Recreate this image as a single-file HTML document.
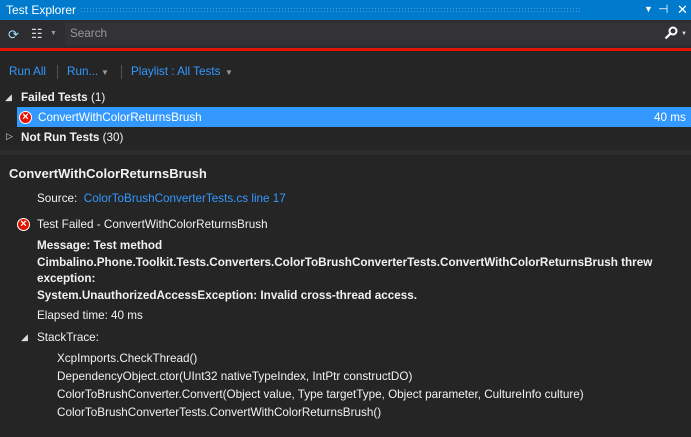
<!DOCTYPE html>
<html><head><style>
body{margin:0;width:691px;height:437px;background:#252526;font-family:"Liberation Sans",sans-serif;font-size:11.7px;color:#f1f1f1;position:relative;overflow:hidden}
.a{position:absolute;white-space:nowrap}
.b{font-weight:bold}
.l{color:#3399ff}
.x{position:absolute;width:13px;height:13px;border-radius:50%;background:#e51400;border:1px solid #fff;box-sizing:border-box;color:#fff;font-size:11px;line-height:11px;text-align:center;font-weight:bold}
</style></head><body>
<div class="a" style="left:0;top:0;width:691px;height:20px;background:#007acc"></div>
<div class="a" style="left:6px;top:3px;color:#fff;font-size:12px">Test Explorer</div>
<div class="a" style="left:80px;top:7px;width:500px;height:6px;background-image:radial-gradient(#4aa0dd 0.6px,transparent 0.8px);background-size:3px 3px"></div>
<div class="a" style="left:644px;top:4px;color:#fff;font-size:9px">▼</div>
<div class="a" style="left:658px;top:2px;color:#fff;font-size:12px">⊣</div>
<div class="a" style="left:677px;top:2px;color:#fff;font-size:13px">✕</div>
<div class="a" style="left:0;top:20px;width:691px;height:29px;background:#2d2d30"></div>
<div class="a" style="left:65px;top:23px;width:626px;height:22px;background:#333337"></div>
<div class="a" style="left:8px;top:27px;color:#9cdcfe;font-size:13px">⟳</div>
<div class="a" style="left:31px;top:26px;color:#ddd;font-size:13px">☷</div>
<div class="a" style="left:50px;top:30px;color:#999;font-size:7px">▼</div>
<div class="a" style="left:70px;top:27px;color:#999">Search</div>
<svg class="a" style="left:664px;top:26px" width="14" height="14" viewBox="0 0 14 14"><circle cx="9" cy="5" r="3.5" fill="none" stroke="#fff" stroke-width="2"/><line x1="6.5" y1="7.5" x2="1.5" y2="12.5" stroke="#fff" stroke-width="2.2"/></svg>
<div class="a" style="left:681px;top:31px;color:#ddd;font-size:6px">▼</div>
<div class="a" style="left:0;top:48px;width:691px;height:3px;background:#e51400"></div>
<div class="a l" style="left:9px;top:65px">Run All</div>
<div class="a" style="left:57px;top:65px;width:1px;height:14px;background:#555"></div>
<div class="a l" style="left:67px;top:65px">Run...</div>
<div class="a" style="left:101px;top:68px;color:#999;font-size:8px">▼</div>
<div class="a" style="left:121px;top:65px;width:1px;height:14px;background:#555"></div>
<div class="a l" style="left:131px;top:65px">Playlist : All Tests</div>
<div class="a" style="left:225px;top:68px;color:#999;font-size:8px">▼</div>
<div class="a" style="left:5px;top:92px;color:#ddd;font-size:9px">◢</div>
<div class="a b" style="left:21px;top:91px">Failed Tests <span style="font-weight:normal">(1)</span></div>
<div class="a" style="left:17px;top:107px;width:674px;height:20px;background:#3399ff"></div>
<div class="x" style="left:19px;top:111px">×</div>
<div class="a" style="left:38px;top:111px;color:#fff">ConvertWithColorReturnsBrush</div>
<div class="a" style="left:654px;top:111px;color:#fff">40 ms</div>
<div class="a" style="left:6px;top:131px;color:#ddd;font-size:9px">▷</div>
<div class="a b" style="left:21px;top:131px">Not Run Tests <span style="font-weight:normal">(30)</span></div>
<div class="a" style="left:0;top:150px;width:691px;height:5px;background:#2d2d30"></div>
<div class="a b" style="left:9px;top:166px;font-size:13px">ConvertWithColorReturnsBrush</div>
<div class="a" style="left:37px;top:192px">Source:&nbsp; <span class="l">ColorToBrushConverterTests.cs line 17</span></div>
<div class="x" style="left:17px;top:218px">×</div>
<div class="a" style="left:37px;top:218px">Test Failed - ConvertWithColorReturnsBrush</div>
<div class="a b" style="left:37px;top:238px;line-height:16.5px">Message: Test method<br>Cimbalino.Phone.Toolkit.Tests.Converters.ColorToBrushConverterTests.ConvertWithColorReturnsBrush threw<br>exception:<br>System.UnauthorizedAccessException: Invalid cross-thread access.</div>
<div class="a" style="left:37px;top:309px">Elapsed time: 40 ms</div>
<div class="a" style="left:21px;top:332px;color:#ddd;font-size:9px">◢</div>
<div class="a" style="left:37px;top:331px">StackTrace:</div>
<div class="a" style="left:57px;top:350px;line-height:18px">XcpImports.CheckThread()<br>DependencyObject.ctor(UInt32 nativeTypeIndex, IntPtr constructDO)<br>ColorToBrushConverter.Convert(Object value, Type targetType, Object parameter, CultureInfo culture)<br>ColorToBrushConverterTests.ConvertWithColorReturnsBrush()</div>
</body></html>
